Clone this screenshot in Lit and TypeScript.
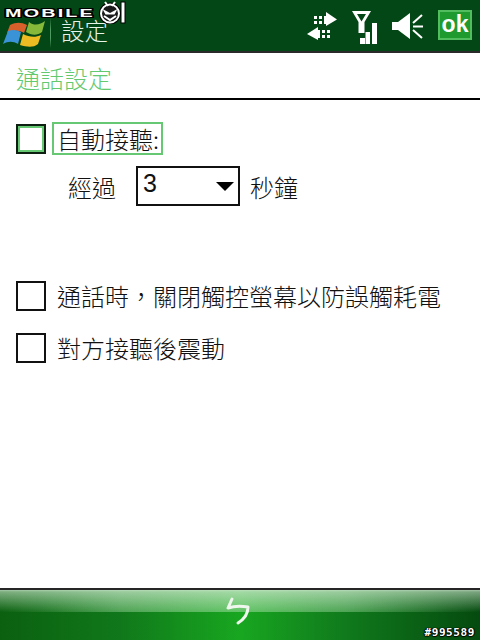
import { LitElement, html, css } from "lit";
import { customElement } from "lit/decorators.js";

@customElement("app-root")
export class AppRoot extends LitElement {
  static styles = css`
    :host { display: flex; flex-direction: column; width: 480px; height: 640px; background: #fff; position: relative; overflow: hidden;
      font-family: "Noto Sans CJK TC", "Liberation Sans", sans-serif; color: #111; }
    .top { height: 51px; flex: none; background: #044716; border-bottom: 2px solid #2a2a2a; box-sizing: content-box; display: flex; align-items: center; position: relative; }
    .flag { width: 42px; height: 30px; margin: 13px 0 0 3px; flex: none; }
    .sep { width: 1px; height: 31px; margin: 14px 0 0 5px; background: linear-gradient(#044716, #4e9a60 40%, #4e9a60 70%, #044716); flex: none; }
    .apptitle { margin: 9px 0 0 10px; font-size: 23.500px; line-height: 20px; color: #e8f3ea; font-weight: 300; }
    .status { margin-left: auto; display: flex; align-items: flex-start; height: 51px; padding-right: 8px; }
    .status svg { display: block; flex: none; }
    .i1 { margin: 11px 13px 0 0; } .i2 { margin: 11px 13px 0 0; } .i3 { margin: 13px 15px 0 0; }
    .ok { width: 34px; height: 30px; margin-top: 10px; box-sizing: border-box; background: #1f9a2e; border: 2px solid #52bd5f; color: #fff; font: 700 23px/25px "Liberation Sans", sans-serif; text-align: center; }
    .logo { position: absolute; left: 3px; top: 1px; width: 124px; height: 23px; }
    .logotext { position: absolute; left: 2px; top: 8px; font: 700 11px/8px "Liberation Sans", sans-serif; color: #fff; letter-spacing: 1.200px; white-space: nowrap; transform: scaleX(1.800); transform-origin: left center;
      text-shadow: 1px 0 0 #000, -1px 0 0 #000, 0 1px 0 #000, 0 -1px 0 #000, 1px 1px 0 #000, -1px -1px 0 #000, 1px -1px 0 #000, -1px 1px 0 #000; }
    .logosvg { position: absolute; left: 96px; top: 0; display: block; }
    .page { flex: 1; display: flex; flex-direction: column; min-height: 0; }
    .heading { height: 45px; border-bottom: 2px solid #000; padding-left: 16px; font-size: 24px; line-height: 50px; color: #62c96f; font-weight: 300; flex: none; }
    .content { flex: 1; padding: 22px 0 0 16px; }
    .row { display: flex; align-items: center; }
    .box { width: 30px; height: 30px; box-sizing: border-box; border: 2px solid #111; background: #fff; flex: none; }
    .box.focus { border: 2px solid #0d1f10; box-shadow: inset 0 0 0 2px #66c873; }
    .label { font-size: 24px; line-height: 30px; margin-left: 10px; font-weight: 300; }
    .label.focus { margin-left: 6px; border: 2px solid #66c873; padding: 0 0 0 3px; height: 33px; width: 111px; box-sizing: border-box; line-height: 30px; white-space: nowrap; }
    .after { display: flex; align-items: center; margin: 11px 0 0 52px; height: 40px; font-size: 24px; font-weight: 300; }
    .select { width: 104px; height: 40px; box-sizing: border-box; border: 2px solid #111; margin: 0 10px 0 20px; display: flex; padding: 0 4px 0 5px; font: 400 25px/31px "Liberation Sans", sans-serif; align-items: flex-start; }
    .arrow { margin: 14px 0 0 auto; width: 0; height: 0; border-left: 9px solid transparent; border-right: 9px solid transparent; border-top: 9px solid #000; }
    .r2 { margin-top: 75px; }
    .r2 .label, .r3 .label { margin-left: 11px; }
    .r3 { margin-top: 22px; }
    .bottom { height: 52px; flex: none; border-top: 2px solid #262626; box-sizing: border-box; position: relative; background:
        linear-gradient(90deg, #0b6010 0%, #10781a 25%, #18a620 50%, #107a1c 72%, #054a0f 100%); }
    .gloss { height: 22px; background:
        linear-gradient(180deg, rgba(215,235,215,.75) 0, rgba(215,235,215,.55) 2px, rgba(190,225,190,0) 100%),
        linear-gradient(90deg, transparent 0, rgba(170,225,170,.1) 8%, rgba(170,225,170,.4) 25%, rgba(170,225,170,.5) 50%, rgba(170,225,170,.4) 72%, rgba(170,225,170,.1) 92%, transparent 100%); }
    .softkey { position: absolute; left: 225px; top: 7px; display: block; }
    .watermark { position: absolute; right: 5px; bottom: 0; font: 700 11px/14px "DejaVu Sans Mono", monospace; color: #fff; text-shadow: 0 0 1px #000, 1px 0 1px #000, -1px 0 1px #000, 0 1px 1px #000; letter-spacing: 0.6px; }
  `;

  render() {
    return html`
      <div class="top">
        <svg class="flag" viewBox="0 0 42 30">
          <path d="M7 8 C13 5 18 5 24 8 L21 16 C16 13 11 13 4 16 Z" fill="#d9602a" />
          <path d="M26 5 C31 9 37 8 42 4 L39 15 C34 19 28 18 23 15 Z" fill="#86b93a" />
          <path d="M5 14 C10 12 14 13 18 15 L15 27 C10 24 5 24 0 27 Z" fill="#3a93d6" />
          <path d="M20 17 C26 20 32 21 38 18 L35 27 C30 31 24 30 17 28 Z" fill="#edbb22" />
        </svg>
        <div class="sep"></div>
        <div class="apptitle">設定</div>
        <div class="status">
          <svg class="i1" width="32" height="30" viewBox="0 0 32 30">
            <path d="M8 5h3v3H8zM13 5h3v3h-3zM8 10h3v3H8zM13 10h3v3h-3zM18 5h4v8h-4z" fill="#fff"/>
            <path d="M20 1 31 8.500 20 15z" fill="#fff"/>
            <path d="M16 19h3v3h-3zM21 19h3v3h-3zM16 24h3v3h-3zM21 24h3v3h-3zM10 19h4v8h-4z" fill="#fff"/>
            <path d="M12 16 1 23 12 29z" fill="#fff"/>
          </svg>
          <svg class="i2" width="27" height="33" viewBox="0 0 27 33">
            <path d="M1 0h19l-6.500 11v11h-6V11zM6 3l4.500 7.500L15 3z" fill="#fff" fill-rule="evenodd"/>
            <path d="M9 27h5v6H9zM14.500 21h4.500v12h-4.500zM21 12h5v21h-5z" fill="#fff"/>
          </svg>
          <svg class="i3" width="32" height="27" viewBox="0 0 32 27">
            <path d="M1 9h6L19 0v26L7 17H1z" fill="#fff"/>
            <path d="M22 10 31 2M22 13.500h10M22 17l9 8" stroke="#fff" stroke-width="2" fill="none"/>
          </svg>
          <div class="ok">ok</div>
        </div>
        <div class="logo">
          <div class="logotext">MOBILE</div>
          <svg class="logosvg" width="27" height="23" viewBox="0 0 27 23">
            <ellipse cx="11" cy="12.500" rx="9" ry="9" fill="#111" stroke="#000" stroke-width="4"/>
            <ellipse cx="11" cy="12.500" rx="9" ry="9" fill="#1a1a1a" stroke="#fff" stroke-width="2"/>
            <path d="M3.500 8 11 12l7.500-4-3 5.500h-9z" fill="#fff"/>
            <path d="M5 15l6 4 6-4" stroke="#fff" stroke-width="2" fill="none"/>
            <path d="M6 1l3 4M16 1l-3 4" stroke="#fff" stroke-width="2"/>
            <rect x="22" y="1" width="4" height="21" fill="#fff" stroke="#000" stroke-width="1"/>
          </svg>
        </div>
      </div>
      <div class="page">
        <div class="heading">通話設定</div>
        <div class="content">
          <div class="row">
            <div class="box focus"></div>
            <div class="label focus">自動接聽:</div>
          </div>
          <div class="after">
            <span>經過</span>
            <div class="select"><span>3</span><div class="arrow"></div></div>
            <span>秒鐘</span>
          </div>
          <div class="row r2">
            <div class="box"></div>
            <div class="label">通話時，關閉觸控螢幕以防誤觸耗電</div>
          </div>
          <div class="row r3">
            <div class="box"></div>
            <div class="label">對方接聽後震動</div>
          </div>
        </div>
      </div>
      <div class="bottom">
        <div class="gloss"></div>
        <svg class="softkey" width="26" height="32" viewBox="0 0 26 32">
          <path d="M7 2 3 11C9 9 16 9 23 10 23 16 21 21 13 26" stroke="#eef6ee" stroke-width="3" fill="none" stroke-linecap="round" stroke-linejoin="round"/>
        </svg>
        <div class="watermark">#995589</div>
      </div>
    `;
  }
}
